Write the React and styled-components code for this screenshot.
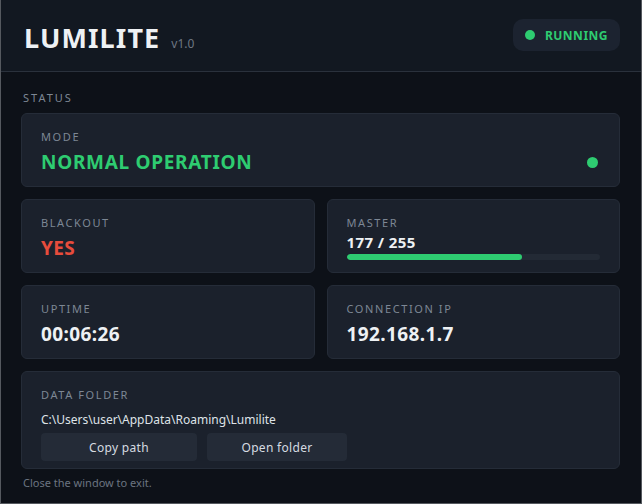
import React from 'react';
import styled, { createGlobalStyle } from 'styled-components';

const GlobalStyle = createGlobalStyle`
  html, body {
    margin: 0;
    padding: 0;
    background: #0d1118;
  }
  * { box-sizing: border-box; }
`;

const Window = styled.div`
  width: 642px;
  height: 504px;
  display: flex;
  flex-direction: column;
  background: #0d1118;
  border: 1px solid #55595f;
  border-top: none;
  font-family: "Noto Sans", "Open Sans", sans-serif;
  color: #eef1f4;
  overflow: hidden;
`;

const Header = styled.header`
  height: 72px;
  flex-shrink: 0;
  display: flex;
  align-items: center;
  justify-content: space-between;
  padding: 0 21px 0 23px;
  background: #121821;
  border-bottom: 1px solid #2a313c;
`;

const Brand = styled.div`
  display: flex;
  align-items: baseline;
  gap: 11px;
  margin-top: 4px;
`;

const Title = styled.h1`
  margin: 0;
  font-size: 27px;
  font-weight: 700;
  letter-spacing: 1.1px;
  color: #eef1f4;
`;

const Version = styled.span`
  font-size: 12px;
  color: #6e7783;
`;

const Badge = styled.div`
  display: flex;
  align-items: center;
  gap: 10px;
  height: 32px;
  padding: 0 12px;
  margin-bottom: 1px;
  border-radius: 10px;
  background: #1c2330;
  color: #2ecc71;
  font-size: 12px;
  font-weight: 700;
  letter-spacing: 0.5px;
`;

const Dot = styled.span`
  width: ${p => p.size || 10}px;
  height: ${p => p.size || 10}px;
  border-radius: 50%;
  background: #2ecc71;
  flex-shrink: 0;
`;

const Main = styled.main`
  display: flex;
  flex-direction: column;
  padding: 18px 21px 0 20px;
`;

const SectionLabel = styled.div`
  font-size: 11px;
  line-height: 16px;
  letter-spacing: 2px;
  color: #7d8794;
  margin: 0 0 7px 2px;
`;

const Stack = styled.div`
  display: flex;
  flex-direction: column;
  gap: 12px;
`;

const Grid = styled.div`
  display: grid;
  grid-template-columns: 1fr 1fr;
  gap: 12px;
`;

const Card = styled.div`
  display: flex;
  flex-direction: column;
  padding: ${p => p.$compact ? '15px 19px 7px' : '15px 19px 11px'};
  background: #1b212c;
  border: 1px solid #252c38;
  border-radius: 6px;
`;

const CardRow = styled.div`
  display: flex;
  align-items: center;
  justify-content: space-between;
  padding-right: 2px;
`;

const Label = styled.div`
  font-size: 11px;
  line-height: 16px;
  letter-spacing: 1.6px;
  color: #7d8794;
  margin-bottom: 4px;
`;

const Value = styled.div`
  font-size: 19px;
  line-height: 26px;
  font-weight: 700;
  letter-spacing: ${p => p.$spaced ? '0.7px' : '0.4px'};
  color: ${p => p.$color || '#eef1f4'};
`;

const SmallValue = styled.div`
  font-size: 15px;
  line-height: 20px;
  font-weight: 700;
  letter-spacing: 0.4px;
  margin-top: -3px;
  color: #eef1f4;
`;

const Track = styled.div`
  height: 6px;
  margin-top: 2px;
  border-radius: 3px;
  background: #232a35;
  overflow: hidden;
`;

const Fill = styled.div`
  height: 100%;
  border-radius: 3px;
  background: #2ecc71;
`;

const Path = styled.div`
  font-size: 12px;
  line-height: 18px;
  color: #dfe3e8;
  margin-top: 4px;
`;

const Buttons = styled.div`
  display: flex;
  gap: 10px;
  margin-top: 4px;
`;

const Button = styled.button`
  width: ${p => p.$width}px;
  height: 28px;
  border: none;
  border-radius: 4px;
  background: #242b37;
  color: #d6dbe1;
  font-family: inherit;
  font-size: 12px;
  letter-spacing: 0.3px;
  cursor: pointer;
`;

const Footer = styled.div`
  margin: 6px 0 0 2px;
  font-size: 11px;
  line-height: 16px;
  color: #6b7480;
`;

export default function App() {
  const master = 177;
  return (
    <>
      <GlobalStyle />
      <Window>
        <Header>
          <Brand>
            <Title>LUMILITE</Title>
            <Version>v1.0</Version>
          </Brand>
          <Badge>
            <Dot />
            RUNNING
          </Badge>
        </Header>
        <Main>
          <SectionLabel>STATUS</SectionLabel>
          <Stack>
            <Card>
              <Label>MODE</Label>
              <CardRow>
                <Value $color="#2ecc71" $spaced>NORMAL OPERATION</Value>
                <Dot size={11} />
              </CardRow>
            </Card>
            <Grid>
              <Card>
                <Label>BLACKOUT</Label>
                <Value $color="#e74c3c">YES</Value>
              </Card>
              <Card>
                <Label>MASTER</Label>
                <SmallValue>{master} / 255</SmallValue>
                <Track>
                  <Fill style={{ width: `${(master / 255) * 100}%` }} />
                </Track>
              </Card>
              <Card>
                <Label>UPTIME</Label>
                <Value>00:06:26</Value>
              </Card>
              <Card>
                <Label>CONNECTION IP</Label>
                <Value>192.168.1.7</Value>
              </Card>
            </Grid>
            <Card $compact>
              <Label>DATA FOLDER</Label>
              <Path>C:\Users\user\AppData\Roaming\Lumilite</Path>
              <Buttons>
                <Button $width={156}>Copy path</Button>
                <Button $width={140}>Open folder</Button>
              </Buttons>
            </Card>
          </Stack>
          <Footer>Close the window to exit.</Footer>
        </Main>
      </Window>
    </>
  );
}
